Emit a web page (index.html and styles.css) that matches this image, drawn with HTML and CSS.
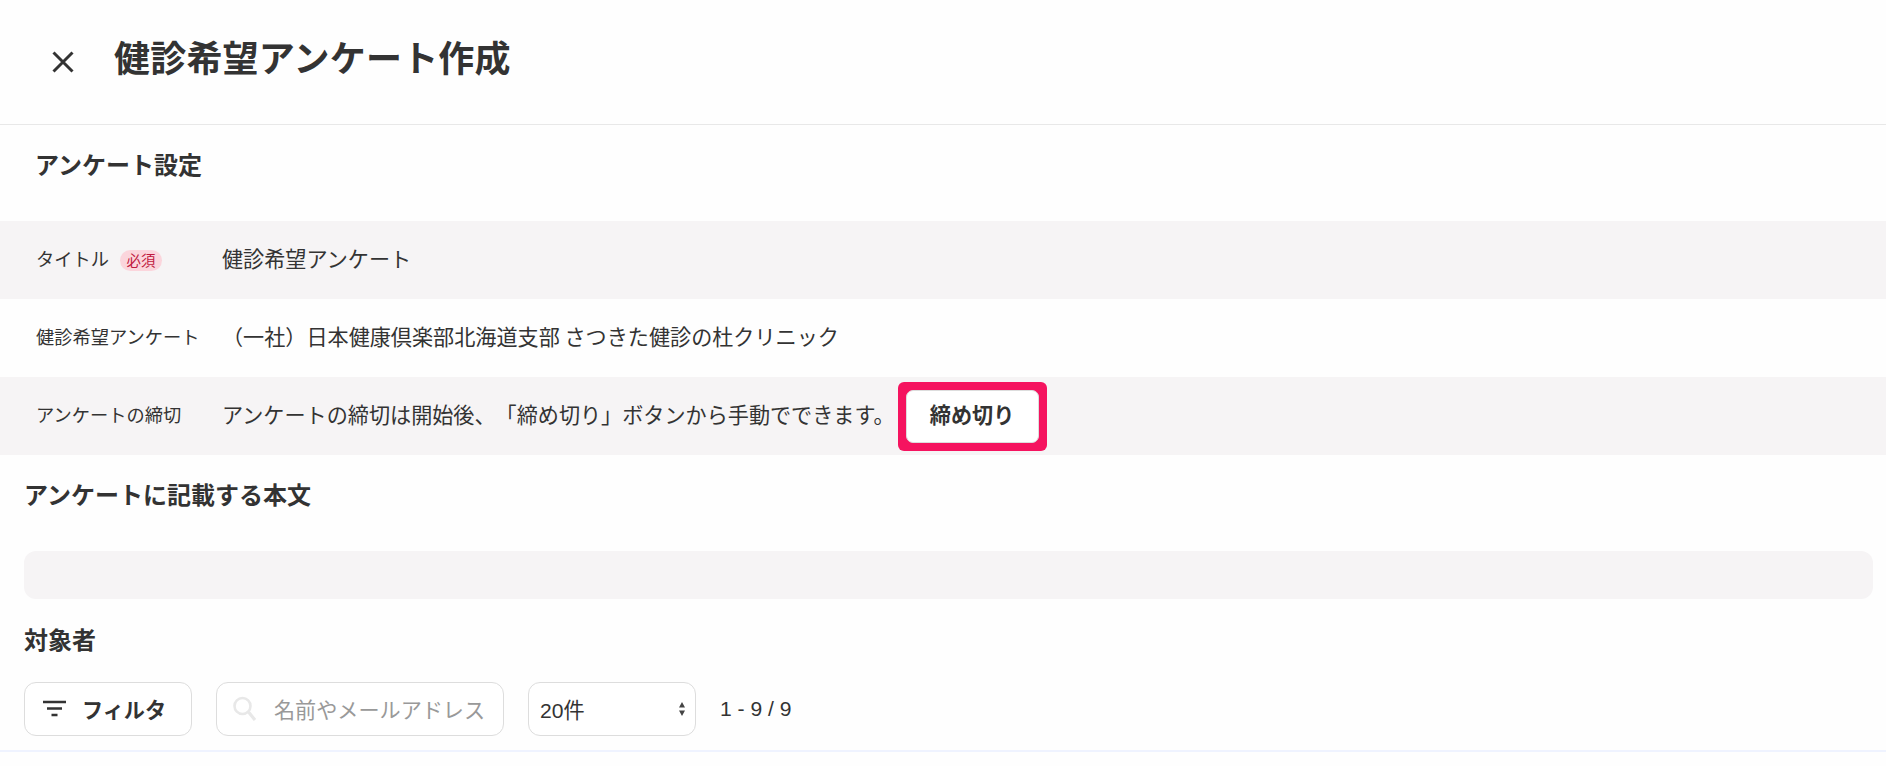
FILE: index.html
```html
<!DOCTYPE html>
<html lang="ja">
<head>
  <meta charset="UTF-8" />
  <title>健診希望アンケート作成</title>
  <link rel="stylesheet" href="styles.css">
</head>
<body>

  <header class="page-header">
    <button class="close-btn" aria-label="閉じる">
      <svg width="24" height="24" viewBox="0 0 24 24"><path d="M2.5 2.5 L21.5 21.5 M21.5 2.5 L2.5 21.5" stroke="#333" stroke-width="3" fill="none"/></svg>
    </button>
    <h1>健診希望アンケート作成</h1>
  </header>

  <section class="settings">
    <h2 class="settings-title">アンケート設定</h2>
    <div class="row row-shaded">
      <div class="row-label">タイトル<span class="badge">必須</span></div>
      <div class="row-value">健診希望アンケート</div>
    </div>
    <div class="row">
      <div class="row-label">健診希望アンケート</div>
      <div class="row-value">（一社）日本健康倶楽部北海道支部 さつきた健診の杜クリニック</div>
    </div>
    <div class="row row-shaded">
      <div class="row-label">アンケートの締切</div>
      <div class="row-value">アンケートの締切は開始後、「締め切り」ボタンから手動でできます。</div>
      <div class="deadline-frame">
        <button class="deadline-btn">締め切り</button>
      </div>
    </div>
  </section>

  <section class="body-text">
    <h2>アンケートに記載する本文</h2>
    <div class="text-box"></div>
  </section>

  <section class="targets">
    <h2>対象者</h2>
    <div class="toolbar">
      <button class="control filter-btn">
        <svg width="24" height="18" viewBox="0 0 24 18"><path d="M1 2 H24 M5 8.5 H20 M9.5 15 H15.5" stroke="#333" stroke-width="2.6" fill="none"/></svg>
        フィルタ
      </button>
      <div class="control search">
        <svg width="24" height="26" viewBox="0 0 24 26"><circle cx="9.5" cy="10" r="8" stroke="#e8e8e8" stroke-width="2.6" fill="none"/><path d="M15.5 16 L22 24" stroke="#e8e8e8" stroke-width="3.2" fill="none"/></svg>
        <input type="text" placeholder="名前やメールアドレス">
      </div>
      <div class="control per-page">
        <span>20件</span>
        <svg width="6" height="14" viewBox="0 0 6 14"><path d="M3 0 L6 5.5 H0 Z M3 14 L6 8.5 H0 Z" fill="#444"/></svg>
      </div>
      <span class="count">1 - 9 / 9</span>
    </div>
  </section>

</body>
</html>
```

FILE: styles.css
```css
html, body {
  margin: 0;
  padding: 0;
}
body {
  background: #fefefe;
  color: #333;
  font-family: "Noto Sans CJK JP", "Noto Sans", sans-serif;
  text-spacing-trim: space-all;
  height: 766px;
  overflow: hidden;
}
h1, h2 {
  margin: 0;
}
.page-header {
  display: flex;
  align-items: center;
  height: 124px;
  padding-left: 51px;
  border-bottom: 1px solid #e8e8e8;
}
.close-btn {
  display: flex;
  width: 24px;
  height: 24px;
  padding: 0;
  border: none;
  background: none;
  margin-right: 39px;
}
.page-header h1 {
  font-size: 36px;
  line-height: 48px;
  font-weight: 700;
  letter-spacing: 0.2px;
  margin-top: -12px;
}
.settings-title {
  font-size: 24px;
  line-height: 36px;
  font-weight: 700;
  padding: 21px 35px 39px;
}
.row {
  display: flex;
  align-items: center;
  height: 78px;
  padding-left: 36px;
}
.row-shaded {
  background: #f6f4f5;
}
.row-label {
  display: flex;
  align-items: center;
  width: 186px;
  padding-bottom: 5px;
  font-size: 18.24px;
}
.row-value {
  padding-bottom: 5px;
  font-size: 21.12px;
}
.badge {
  width: 42px;
  height: 21px;
  margin: 5px 0 0 11px;
  border-radius: 11px;
  background: #fbd5dc;
  color: #c0193f;
  font-size: 14.4px;
  line-height: 19px;
  text-align: center;
}
.deadline-frame {
  margin-left: 3px;
  padding: 8px;
  border-radius: 6px;
  background: #f5135f;
}
.deadline-btn {
  display: block;
  width: 133px;
  height: 53px;
  padding: 0 0 4px;
  border: 1px solid #ddd;
  border-radius: 7px;
  background: #fff;
  color: #333;
  font-family: inherit;
  font-size: 21.12px;
  font-weight: 700;
}
.body-text {
  padding: 0 13px 0 24px;
}
.body-text h2,
.targets h2 {
  font-size: 24px;
  line-height: 36px;
  font-weight: 700;
}
.body-text h2 {
  padding-top: 21px;
}
.text-box {
  height: 48px;
  margin-top: 39px;
  border-radius: 12px;
  background: #f6f4f5;
}
.targets {
  padding: 22px 24px 0;
  height: 129px;
  border-bottom: 2px solid #eff3ff;
}
.toolbar {
  display: flex;
  align-items: center;
  gap: 24px;
  margin-top: 25px;
}
.control {
  display: flex;
  align-items: center;
  box-sizing: border-box;
  height: 54px;
  border: 1px solid #ddd;
  border-radius: 12px;
  background: #fff;
  color: #333;
  font-family: inherit;
  font-size: 21.12px;
}
.filter-btn {
  width: 168px;
  padding: 0 0 0 17px;
  gap: 16px;
  font-weight: 700;
}
.search {
  width: 288px;
  padding-left: 16px;
  gap: 17px;
}
.search input {
  width: 225px;
  border: none;
  outline: none;
  padding: 0;
  background: none;
  font-family: inherit;
  font-size: 21.12px;
}
.search input::placeholder {
  color: #999;
}
.per-page {
  width: 168px;
  padding: 0 10px 0 11px;
  justify-content: space-between;
  font-family: "Liberation Sans", "Noto Sans CJK JP", sans-serif;
}
.count {
  font-family: "Liberation Sans", sans-serif;
  font-size: 21.12px;
}
```
